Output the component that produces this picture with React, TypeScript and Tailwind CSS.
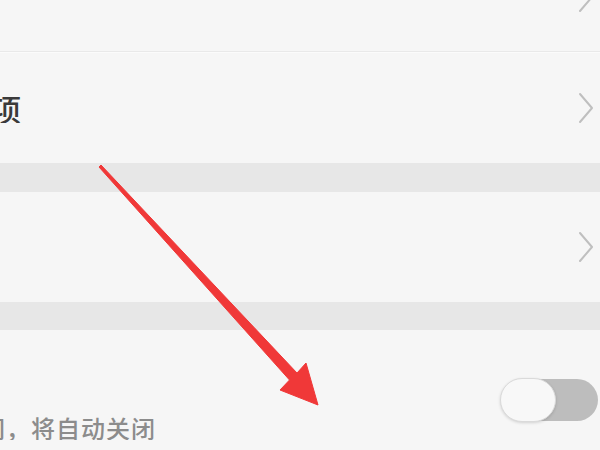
import React from 'react';

const Chevron: React.FC = () => (
  <svg width="16" height="32" viewBox="0 0 16 32" fill="none" className="shrink-0">
    <path d="M2 2 L14 16 L2 30" stroke="#bfbfbf" strokeWidth={2} strokeLinecap="round" strokeLinejoin="round" />
  </svg>
);

const Row: React.FC<{ children?: React.ReactNode; className?: string }> = ({ children, className = '' }) => (
  <div className={`flex items-center justify-between bg-[#f6f6f6] pr-[6px] ${className}`}>
    <div className="flex-1 overflow-hidden">{children}</div>
    <Chevron />
  </div>
);

const App: React.FC = () => {
  return (
    <div
      className="relative w-[600px] h-[450px] overflow-hidden bg-[#f6f6f6]"
      style={{ fontFamily: '"Noto Sans CJK SC", "Noto Sans", sans-serif' }}
    >
      {/* 上面被截掉的一行 */}
      <Row className="h-[108px] -mt-[57px]" />
      <div className="h-px bg-[#e9e9e9]" />
      <div className="h-px bg-[#fbfbfb]" />

      <Row className="h-[110px]">
        <span className="block -ml-[9px] text-[30px] leading-none font-medium text-[#3a3a3a]">项</span>
      </Row>

      <div className="h-[29px] bg-[#e7e7e7]" />

      <Row className="h-[110px]" />

      <div className="h-[28px] bg-[#e7e7e7]" />

      {/* 开关行 */}
      <div className="flex items-start justify-between bg-[#f6f6f6] h-[130px]">
        <div className="pt-[86px] overflow-hidden">
          <span className="block -ml-[19px] text-[24px] leading-none tracking-[1px] font-medium text-[#8c8c8c]">
            间，将自动关闭
          </span>
        </div>
        <div className="relative mt-[49px] mr-[2px] w-[96px] h-[42px] rounded-full bg-[#bdbdbd]">
          <div className="absolute -left-[2px] -top-[1px] w-[56px] h-[44px] rounded-full bg-[#f8f8f8] border border-[#dadada] shadow-[0_1px_3px_rgba(0,0,0,0.15)]" />
        </div>
      </div>

      {/* 红色箭头 */}
      <svg className="absolute left-0 top-0 pointer-events-none" width="600" height="450" viewBox="0 0 600 450">
        <polygon
          points="101,165 297,373 306,363 318,405 280,390 289.5,380 99,167"
          fill="#f03838"
          stroke="#f03838"
          strokeWidth={1}
          strokeLinejoin="round"
        />
      </svg>
    </div>
  );
};

export default App;
